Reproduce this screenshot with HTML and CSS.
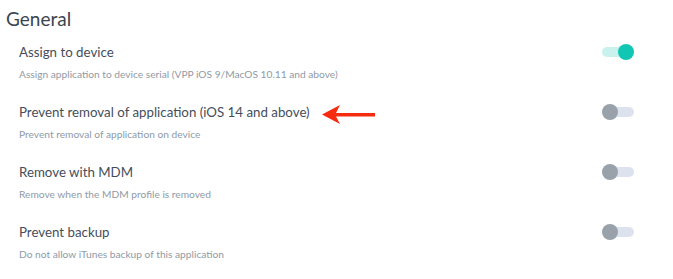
FILE: index.html
```html
<!DOCTYPE html>
<html lang="en">
  <head>
    <meta charset="UTF-8" />
    <title>General</title>
    <link rel="stylesheet" href="styles.css">
  </head>
  <body>
    <div class="general">
      <h2 class="heading">General</h2>

      <div class="option">
        <div class="option-head">
          <span class="option-title">Assign to device</span>
          <span class="toggle on"></span>
        </div>
        <p class="option-desc">Assign application to device serial (VPP iOS 9/MacOS 10.11 and above)</p>
      </div>

      <div class="option">
        <div class="option-head">
          <span class="option-title">
            Prevent removal of application (iOS 14 and above)
            <svg class="arrow" width="53" height="19" viewBox="0 0 53 19">
              <path d="M0 9.5 L18 0 L14 8 L53 8 L53 11.5 L14 11.5 L18 19 Z" fill="#f52c10" />
            </svg>
          </span>
          <span class="toggle"></span>
        </div>
        <p class="option-desc">Prevent removal of application on device</p>
      </div>

      <div class="option">
        <div class="option-head">
          <span class="option-title">Remove with MDM</span>
          <span class="toggle"></span>
        </div>
        <p class="option-desc">Remove when the MDM profile is removed</p>
      </div>

      <div class="option">
        <div class="option-head">
          <span class="option-title">Prevent backup</span>
          <span class="toggle"></span>
        </div>
        <p class="option-desc">Do not allow iTunes backup of this application</p>
      </div>
    </div>
  </body>
</html>
```

FILE: styles.css
```css
body {
  margin: 0;
  background: #fff;
  font-family: Lato, "Noto Sans", sans-serif;
}

.general {
  padding: 6px 39px 0 6px;
}

.heading {
  margin: 0 0 10px 0;
  font-size: 19px;
  line-height: 26px;
  font-weight: 400;
  color: #3b4550;
}

.option {
  padding-left: 13px;
  margin-bottom: 21px;
}

.option-head {
  display: flex;
  justify-content: space-between;
  align-items: center;
  height: 20px;
}

.option-title {
  display: flex;
  align-items: center;
  gap: 12px;
  font-size: 13.3px;
  color: #444e5a;
}

.arrow {
  margin-top: 4px;
}

.option-desc {
  margin: 5px 0 0 0;
  font-size: 10.2px;
  line-height: 14px;
  color: #8f9aa6;
}

.toggle {
  position: relative;
  width: 32px;
  height: 10px;
  border-radius: 5px;
  background: #dde3ee;
}

.toggle::after {
  content: "";
  position: absolute;
  left: 0;
  top: -3px;
  width: 16px;
  height: 16px;
  border-radius: 50%;
  background: #99a2ab;
}

.toggle.on {
  background: #c9f1ed;
}

.toggle.on::after {
  left: 16px;
  background: #12c6b4;
}
```
